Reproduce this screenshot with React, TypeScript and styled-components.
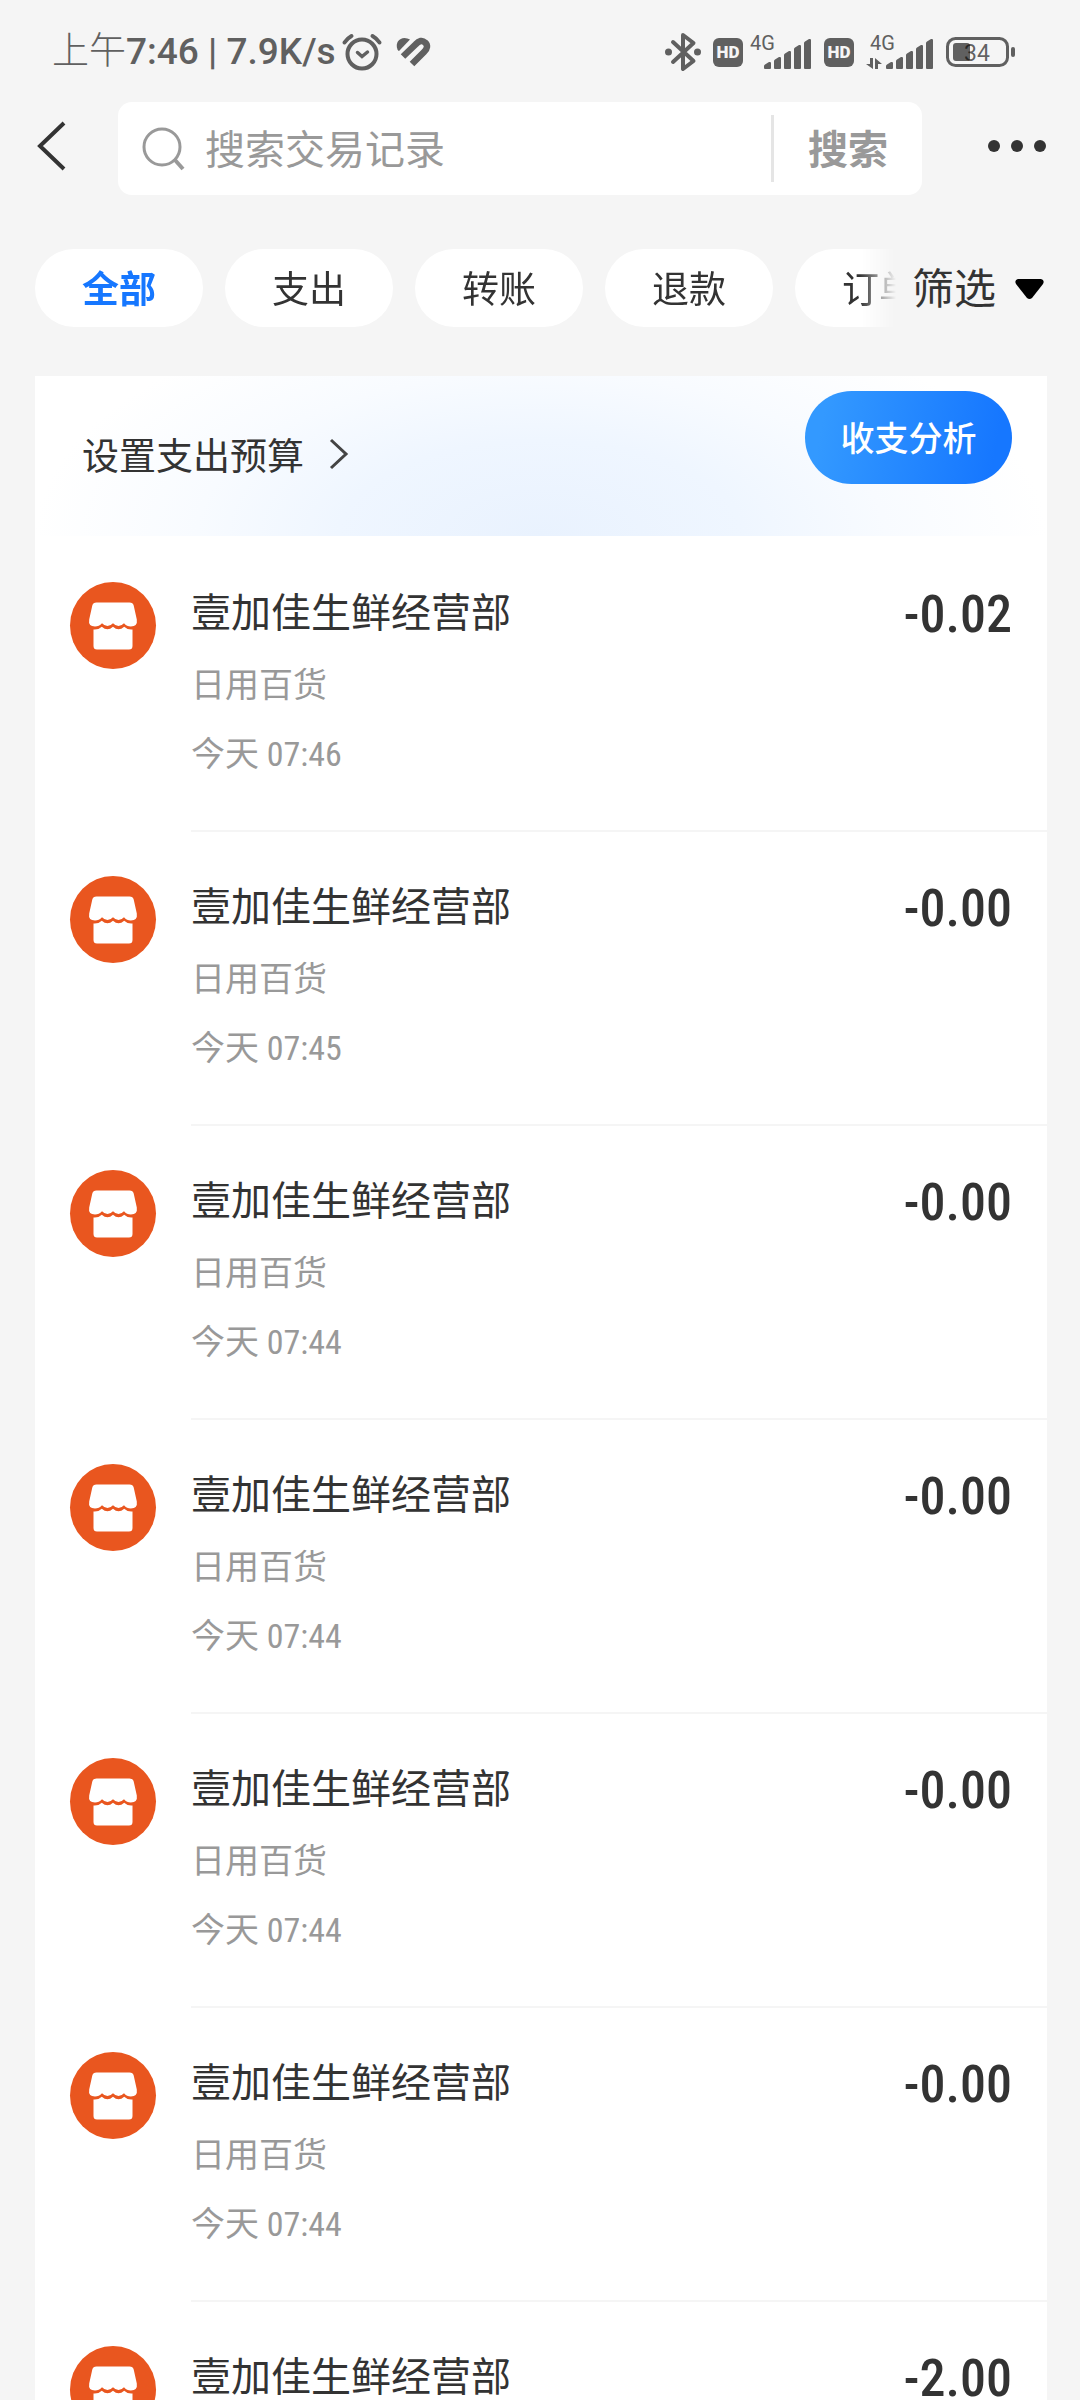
import React from "react";
import styled, { createGlobalStyle, css } from "styled-components";

const CJK = `"Noto Sans CJK SC", "Noto Sans", sans-serif`;
const SANS = `Roboto, ${CJK}`;
const NARROW = `"Roboto Condensed", Roboto, ${CJK}`;

const GlobalStyle = createGlobalStyle`
  *, *::before, *::after { box-sizing: border-box; }
  body {
    margin: 0;
    background: #f5f5f5;
    color: #333;
    font-family: ${CJK};
    -webkit-font-smoothing: antialiased;
  }
  button, input { font: inherit; color: inherit; border: 0; padding: 0; background: none; outline: 0; }
  button { cursor: pointer; }
  svg { display: block; flex: none; overflow: visible; }
`;

const Screen = styled.div`
  height: 100vh;
  display: flex;
  flex-direction: column;
  overflow: hidden;
`;

const StatusBar = styled.header`
  flex: none;
  height: 102px;
  padding: 2px 64px 0 52px;
  display: flex;
  align-items: center;
  justify-content: space-between;
  color: #606060;
`;

const StatusGroup = styled.div<{ $gap: number }>`
  display: flex;
  align-items: center;
  gap: ${(p) => p.$gap}px;
`;

const StatusText = styled.span`
  font: 500 37px/40px ${SANS};
`;

const StatusHan = styled.span`
  font-weight: 300;
`;

const TopBar = styled.div`
  flex: none;
  display: flex;
  align-items: flex-start;
  height: 93px;
  padding: 0 34px;
`;

const IconButton = styled.button`
  display: flex;
  align-items: center;
  height: 88px;
`;

const SearchForm = styled.form`
  flex: 1;
  display: flex;
  align-items: center;
  height: 93px;
  margin: 0 66px 0 48px;
  padding-left: 24px;
  border-radius: 14px;
  background: #fff;
  color: #999;
`;

const SearchInput = styled.input`
  flex: 1;
  min-width: 0;
  height: 64px;
  margin-left: 19px;
  padding-bottom: 4px;
  font-size: 40px;
  line-height: 60px;
  &::placeholder { color: #999; opacity: 1; }
`;

const SearchSubmit = styled.button`
  width: 151px;
  height: 67px;
  padding-bottom: 4px;
  border-left: 3px solid #e5e5e5;
  font-size: 40px;
  line-height: 60px;
  font-weight: 700;
`;

const FilterBar = styled.nav`
  flex: none;
  display: flex;
  align-items: center;
  height: 78px;
  margin: 54px 33px 49px 35px;
`;

const ChipScroller = styled.div`
  flex: 1;
  min-width: 0;
  display: flex;
  gap: 22px;
  overflow: hidden;
  mask-image: linear-gradient(to right, #000 calc(100% - 36px), transparent);
`;

const Chip = styled.button<{ $active?: boolean }>`
  flex: none;
  height: 78px;
  padding: 0 47px 3px;
  border-radius: 39px;
  background: #fff;
  font-size: 37px;
  line-height: 56px;
  ${(p) => p.$active && css`color: #1677ff; font-weight: 700;`}
`;

const FilterButton = styled.button`
  flex: none;
  display: flex;
  align-items: center;
  gap: 19px;
  margin-left: 16px;
  padding-right: 3px;
  font-size: 42px;
  line-height: 60px;
`;

const FilterLabel = styled.span`
  padding-bottom: 4px;
`;

const Card = styled.main`
  flex: 1;
  min-height: 0;
  overflow: hidden;
  margin: 0 33px 0 35px;
  background: #fff;
`;

const Banner = styled.section`
  display: flex;
  justify-content: space-between;
  align-items: flex-start;
  height: 160px;
  padding: 15px 35px 0 47px;
  background: radial-gradient(ellipse 50% 150% at 50% 100%, #e9f2fe 0%, #eff6ff 40%, #f8fbff 68%, #fff 100%);
`;

const BudgetLink = styled.a`
  display: flex;
  align-items: center;
  gap: 26px;
  height: 126px;
  color: #333;
  font-size: 37px;
  text-decoration: none;
`;

const AnalysisButton = styled.button`
  width: 207px;
  height: 93px;
  padding-bottom: 3px;
  border-radius: 47px;
  background: linear-gradient(100deg, #3399ff 10%, #1677ff 90%);
  color: #fff;
  font-size: 34px;
  font-weight: 500;
`;

const List = styled.ul`
  margin: 0;
  padding: 0;
  list-style: none;
`;

const Row = styled.li`
  display: flex;
  align-items: flex-start;
  height: 294px;
  padding-left: 35px;
`;

const Badge = styled.span`
  margin-top: 46px;
`;

const RowBody = styled.div`
  flex: 1;
  display: flex;
  justify-content: space-between;
  height: 294px;
  margin-left: 35px;
  padding: 42px 35px 0 0;
  border-top: 2px solid #f5f5f5;
  ${Row}:first-child & { border-top-color: transparent; }
`;

const Merchant = styled.h2`
  margin: 0;
  font-size: 40px;
  line-height: 60px;
  font-weight: 400;
`;

const Meta = styled.p`
  margin: 0;
  padding-top: 16px;
  color: #999;
  font-size: 34px;
  line-height: 53px;
`;

const Clock = styled.span`
  font-family: ${NARROW};
`;

const Amount = styled.strong`
  padding-top: 1px;
  font: 500 52px/68px ${NARROW};
`;

const AlarmIcon = () => (
  <svg width="40" height="38" viewBox="0 0 40 38" fill="none" stroke="currentColor" strokeWidth="4" strokeLinecap="round">
    <circle cx="20" cy="21" r="14.5" />
    <path d="M2.5 9.500Q5 5.500 9.500 3M37.500 9.500Q35 5.500 30.500 3" />
    <path d="m15.500 19.500 4.500 4 5.500-4.500" strokeWidth="3.500" />
  </svg>
);

const HeartIcon = () => (
  <svg width="34" height="30" viewBox="0 0 34 30" fill="none" stroke="currentColor">
    <path d="M1.500 12.500C-1 6 3 1 8.500 1q3 0 5.500 1.500L3 14q-1-.500-1.500-1.500z" fill="currentColor" stroke="none" />
    <path d="M7 19.500 19.500 7.500Q25 1.500 29 5.500q4.500 4-1 9.500L16 27" strokeWidth="6.500" />
  </svg>
);

const BluetoothIcon = () => (
  <svg width="36" height="40" viewBox="0 0 36 40" fill="none" stroke="currentColor" strokeWidth="4" strokeLinejoin="round" strokeLinecap="round">
    <path d="m8 10 20.500 19-10.500 8V3l10.500 8L8 30" />
    <circle cx="3.500" cy="20" r="3.500" fill="currentColor" stroke="none" />
    <circle cx="32.500" cy="20" r="3.500" fill="currentColor" stroke="none" />
  </svg>
);

const HdIcon = () => (
  <svg width="30" height="29" viewBox="0 0 30 29">
    <rect width="30" height="29" rx="6" fill="currentColor" />
    <text x="15" y="20" textAnchor="middle" fill="#f5f5f5" fontFamily="Roboto, sans-serif" fontWeight="900" fontSize="17">HD</text>
  </svg>
);

const SignalIcon = ({ traffic = false }: { traffic?: boolean }) => {
  const x = traffic ? 20 : 14;
  return (
    <svg width={x + 48} height="36" viewBox={`0 0 ${x + 48} 36`} fill="currentColor">
      <text x={traffic ? 4 : 0} y="16" fontFamily="Roboto, sans-serif" fontSize="20">4G</text>
      {[28, 23, 17, 11, 5].map((top, i) => (
        <path key={top} d={`M${x + i * 10} ${top + 4}q0-1 1-1.500l4-2.500q2-.500 2 1V34q0 1-1 1h-5q-1 0-1-1z`} />
      ))}
      {traffic && <path d="M4 24h3v11L0 30h4zM9 24l7 6h-4v5H9z" />}
    </svg>
  );
};

const BatteryIcon = () => (
  <svg width="70" height="30" viewBox="0 0 70 30">
    <rect x="1.500" y="1.500" width="60" height="27" rx="8" fill="none" stroke="currentColor" strokeWidth="3" />
    <rect x="7" y="6" width="17" height="18" rx="3" fill="currentColor" />
    <rect x="65" y="10" width="4" height="10" rx="2" fill="currentColor" />
    <text x="18" y="24" fill="#000" fillOpacity="0.62" fontFamily="Roboto, sans-serif" fontSize="23">34</text>
  </svg>
);

const BackIcon = () => (
  <svg width="36" height="50" viewBox="0 0 36 50" fill="none" stroke="#333" strokeWidth="4">
    <path d="M30 2 6 25l24 23" />
  </svg>
);

const SearchIcon = () => (
  <svg width="44" height="44" viewBox="0 0 44 44" fill="none" stroke="currentColor" strokeWidth="3">
    <circle cx="20" cy="20" r="18" />
    <path d="m33 33 8 9" strokeWidth="4" />
  </svg>
);

const MoreIcon = () => (
  <svg width="58" height="12" viewBox="0 0 58 12" fill="#333">
    <circle cx="6" cy="6" r="6" />
    <circle cx="29" cy="6" r="6" />
    <circle cx="52" cy="6" r="6" />
  </svg>
);

const CaretIcon = () => (
  <svg width="29" height="21" viewBox="0 0 29 21">
    <path d="M3 1h23q4 1 2 5L17 20q-2.500 2-5 0L1 6Q-1 2 3 1z" fill="#000" />
  </svg>
);

const ChevronIcon = () => (
  <svg width="18" height="30" viewBox="0 0 18 30" fill="none" stroke="#444" strokeWidth="3">
    <path d="m1 1 15 14L1 29" />
  </svg>
);

const ShopIcon = () => (
  <svg width="86" height="87" viewBox="0 0 86 87">
    <ellipse cx="43" cy="43.500" rx="43" ry="43.500" fill="#e9561f" />
    <path fill="#fff" d="M26.500 20.500h33q3.500 0 4.200 3l3.100 14q1 7-6 7-4 0-6.800-3.300-5.500 5.600-11 0-5.500 5.600-11 0-3 3.300-7 3.300-7 0-5.800-7l3.100-14q.700-3 4.200-3z" />
    <path fill="#fff" d="M23.500 47.500q5 .500 8.300-2.800 5.700 5 11.200 0 5.500 5 11.200 0 3.300 3.300 8.300 2.800v16.500q0 3.500-3.500 3.500H27q-3.500 0-3.500-3.500z" />
  </svg>
);

const chips = ["全部", "支出", "转账", "退款", "订单"];

const records = [
  { time: "07:46", amount: "-0.02" },
  { time: "07:45", amount: "-0.00" },
  { time: "07:44", amount: "-0.00" },
  { time: "07:44", amount: "-0.00" },
  { time: "07:44", amount: "-0.00" },
  { time: "07:44", amount: "-0.00" },
  { time: "07:44", amount: "-2.00" },
];

export default function App() {
  return (
    <Screen>
      <GlobalStyle />
      <StatusBar>
        <StatusGroup $gap={14}>
          <StatusGroup $gap={6}>
            <StatusText><StatusHan>上午</StatusHan>7:46 | 7.9K/s</StatusText>
            <AlarmIcon />
          </StatusGroup>
          <HeartIcon />
        </StatusGroup>
        <StatusGroup $gap={12}>
          <BluetoothIcon />
          <StatusGroup $gap={7}><HdIcon /><SignalIcon /></StatusGroup>
          <StatusGroup $gap={12}><HdIcon /><SignalIcon traffic /></StatusGroup>
          <BatteryIcon />
        </StatusGroup>
      </StatusBar>

      <TopBar>
        <IconButton type="button" aria-label="返回"><BackIcon /></IconButton>
        <SearchForm onSubmit={(e) => e.preventDefault()}>
          <SearchIcon />
          <SearchInput type="text" aria-label="搜索交易记录" placeholder="搜索交易记录" />
          <SearchSubmit type="submit">搜索</SearchSubmit>
        </SearchForm>
        <IconButton type="button" aria-label="更多"><MoreIcon /></IconButton>
      </TopBar>

      <FilterBar>
        <ChipScroller>
          {chips.map((label, i) => (
            <Chip key={label} type="button" $active={i === 0}>{label}</Chip>
          ))}
        </ChipScroller>
        <FilterButton type="button"><FilterLabel>筛选</FilterLabel><CaretIcon /></FilterButton>
      </FilterBar>

      <Card>
        <Banner>
          <BudgetLink href="#budget">设置支出预算<ChevronIcon /></BudgetLink>
          <AnalysisButton type="button">收支分析</AnalysisButton>
        </Banner>
        <List>
          {records.map((record, i) => (
            <Row key={i}>
              <Badge><ShopIcon /></Badge>
              <RowBody>
                <div>
                  <Merchant>壹加佳生鲜经营部</Merchant>
                  <Meta>日用百货</Meta>
                  <Meta>今天 <Clock>{record.time}</Clock></Meta>
                </div>
                <Amount>{record.amount}</Amount>
              </RowBody>
            </Row>
          ))}
        </List>
      </Card>
    </Screen>
  );
}
